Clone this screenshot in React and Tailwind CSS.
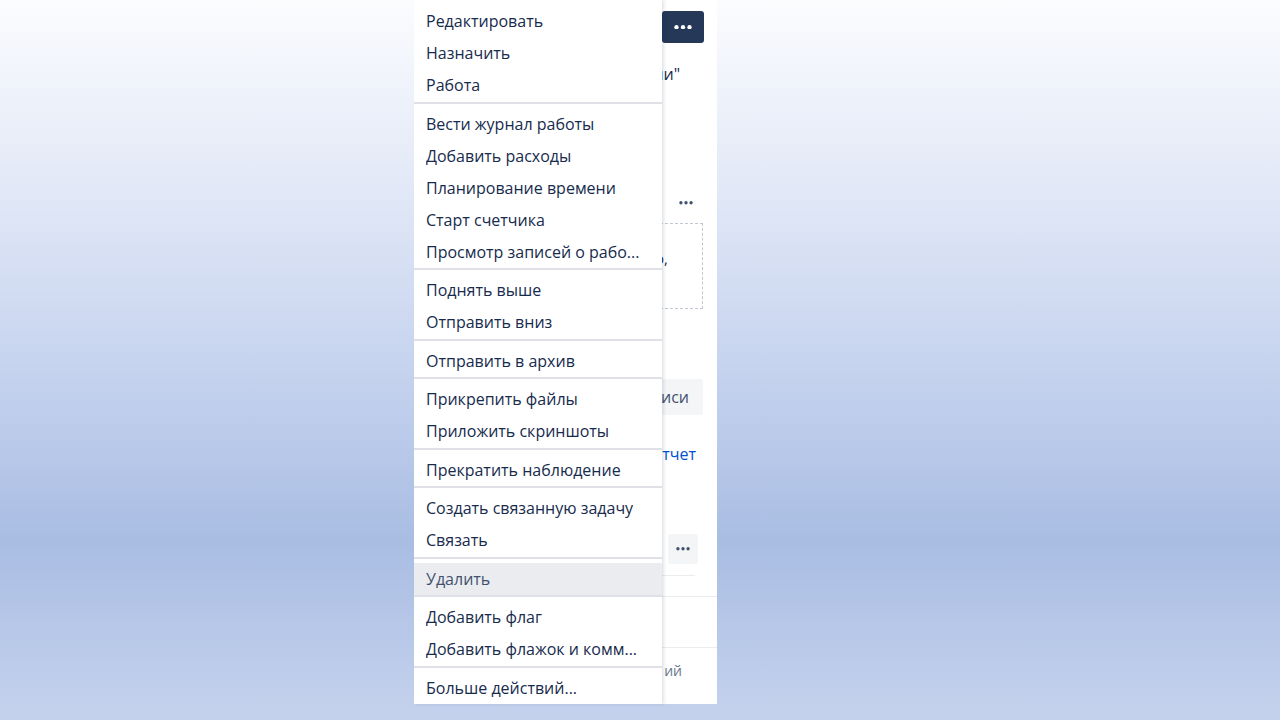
import React from 'react';

const groups = [
  ['Редактировать', 'Назначить', 'Работа'],
  ['Вести журнал работы', 'Добавить расходы', 'Планирование времени', 'Старт счетчика', 'Просмотр записей о рабо...'],
  ['Поднять выше', 'Отправить вниз'],
  ['Отправить в архив'],
  ['Прикрепить файлы', 'Приложить скриншоты'],
  ['Прекратить наблюдение'],
  ['Создать связанную задачу', 'Связать'],
  ['Удалить'],
  ['Добавить флаг', 'Добавить флажок и комм...'],
  ['Больше действий...'],
];

const Dots = ({ color = '#42526e', size = 16 }) => (
  <svg width={size} height={size / 4} viewBox="0 0 16 4">
    <circle cx="2.2" cy="2" r="1.9" fill={color} />
    <circle cx="8" cy="2" r="1.9" fill={color} />
    <circle cx="13.8" cy="2" r="1.9" fill={color} />
  </svg>
);

const ActionsMenu = () => {
  return (
    <div className="absolute top-0 left-0 z-10 w-[248px] h-[704px] pt-px bg-white shadow-[2px_0_3px_rgba(9,30,66,0.12)]">
      {groups.map((items, gi) => (
        <div
          key={gi}
          className={`pt-1 pb-[0.5px] ${gi < groups.length - 1 ? 'border-b-2 border-[#dfe1e6]' : ''}`}
        >
          {items.map((label) => {
            const active = label === 'Удалить';
            return (
              <div
                key={label}
                className={`h-8 flex items-center px-3 text-[16px] whitespace-nowrap overflow-hidden ${
                  active ? 'bg-[#ebecf0] text-[#42526e]' : 'text-[#172b4d]'
                }`}
              >
                <span className="truncate">{label}</span>
              </div>
            );
          })}
        </div>
      ))}
    </div>
  );
};

export default function App() {
  return (
    <div
      className="w-full h-[720px] overflow-hidden bg-[linear-gradient(180deg,#fbfcfe_0%,#e3e9f7_25%,#c7d4ef_50%,#a9bde3_75%,#c5d2ed_100%)]"
      style={{ fontFamily: '"Open Sans", "Noto Sans", sans-serif' }}
    >
      <div className="relative ml-[414px] w-[303px] h-[704px] bg-white">
        <ActionsMenu />

        <div className="pt-[11px] pr-[13px] flex justify-end">
          <button className="w-[42px] h-8 rounded-[3px] bg-[#253858] flex items-center justify-center">
            <Dots color="#ffffff" size={18} />
          </button>
        </div>

        <p className="mt-[19px] pr-[37px] text-right text-[16px] leading-6 text-[#172b4d]">ми"</p>

        <div className="mt-[105px] h-6 pr-[24px] flex items-center justify-end">
          <Dots color="#42526e" size={14} />
        </div>

        <div className="mt-2 ml-4 mr-[14px] h-[86px] border border-dashed border-[#c1c7d0] pt-[24px]">
          <p className="text-right pr-[34px] text-[15px] leading-5 text-[#172b4d]">о,</p>
        </div>

        <div className="mt-[70px] flex justify-end pr-[14px]">
          <div className="w-[200px] h-9 rounded-[3px] bg-[#f4f5f7] flex items-center justify-end pr-[14px] text-[16px] text-[#42526e]">
            иси
          </div>
        </div>

        <p className="mt-[27px] pr-[21px] text-right text-[16px] leading-6 text-[#0052cc]">тчет</p>

        <div className="mt-[68px] flex justify-end pr-[19px]">
          <div className="w-[30px] h-[30px] rounded-[3px] bg-[#f4f5f7] flex items-center justify-center">
            <Dots color="#42526e" size={14} />
          </div>
        </div>

        <div className="mt-[11px] mr-[22px] h-px bg-[#ebecf0]" />
        <div className="mt-[20px] h-px bg-[#ebecf0]" />
        <div className="mt-[50px] h-px bg-[#ebecf0]" />

        <p className="mt-[13px] pr-[35px] text-right text-[14px] leading-5 text-[#6b778c]">ий</p>
      </div>
    </div>
  );
}
